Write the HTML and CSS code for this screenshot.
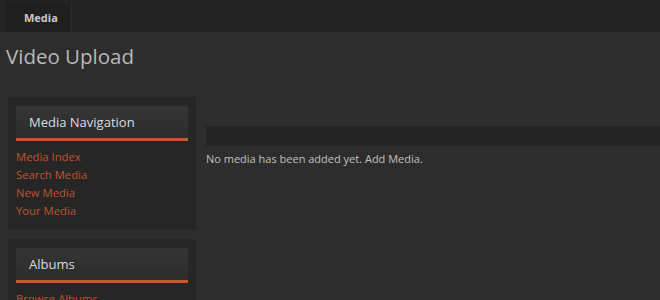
FILE: index.html
```html
<!DOCTYPE html>
<html lang="en">
<head>
    <meta charset="UTF-8">
    <title>Video Upload</title>
    <link rel="stylesheet" href="styles.css">
</head>
<body>
    <div class="topbar">
        <a class="tab" href="#">Media</a>
    </div>

    <h1 class="page-title">Video Upload</h1>

    <div class="layout">
        <aside class="sidebar">
            <div class="block">
                <h3 class="block-head">Media Navigation</h3>
                <ul class="links">
                    <li><a href="#">Media Index</a></li>
                    <li><a href="#">Search Media</a></li>
                    <li><a href="#">New Media</a></li>
                    <li><a href="#">Your Media</a></li>
                </ul>
            </div>
            <div class="block">
                <h3 class="block-head">Albums</h3>
                <ul class="links">
                    <li><a href="#">Browse Albums</a></li>
                </ul>
            </div>
        </aside>

        <main class="content">
            <div class="strip"></div>
            <p class="empty">No media has been added yet. Add Media.</p>
        </main>
    </div>
</body>
</html>
```

FILE: styles.css
```css
body {
    margin: 0;
    background: #2d2d2d;
    font-family: "Open Sans", "DejaVu Sans", sans-serif;
    color: #bbb;
    overflow: hidden;
}

.topbar {
    height: 29px;
    padding: 3px 0 0 6px;
    background: #232323;
    border-top: 1px solid #2c2c2c;
    margin-top: -1px;
}

.tab {
    display: inline-block;
    height: 29px;
    line-height: 29px;
    padding: 0 13px 0 18px;
    background: #1f1f1f;
    border-right: 1px solid #2a2a2a;
    color: #c8c8c8;
    font-size: 11px;
    font-weight: bold;
    text-decoration: none;
}

.page-title {
    margin: 10px 0 0 6px;
    font-size: 20.5px;
    font-weight: normal;
    color: #b8b8b8;
    line-height: 28px;
}

.layout {
    display: flex;
    margin-top: 27px;
}

.sidebar {
    width: 188px;
    margin-left: 8px;
    flex-shrink: 0;
}

.block {
    background: #262626;
    padding: 9px 8px 10px;
    margin-bottom: 9px;
}

.block-head {
    margin: 0;
    height: 32px;
    line-height: 32px;
    padding-left: 13px;
    font-size: 13px;
    font-weight: normal;
    color: #dcdcdc;
    background: linear-gradient(#353535, #2c2c2c);
    border-bottom: 3px solid #c9562f;
}

.links {
    list-style: none;
    margin: 7px 0 0;
    padding: 0;
}

.links li {
    font-size: 11.3px;
    line-height: 18px;
}

.links a {
    color: #c0532d;
    text-decoration: none;
}

.content {
    flex: 1;
    padding-left: 10px;
    padding-top: 29px;
}

.strip {
    height: 20px;
    background: #242424;
}

.empty {
    margin: 5px 0 0;
    font-size: 11px;
    color: #c0c0c0;
}
```
